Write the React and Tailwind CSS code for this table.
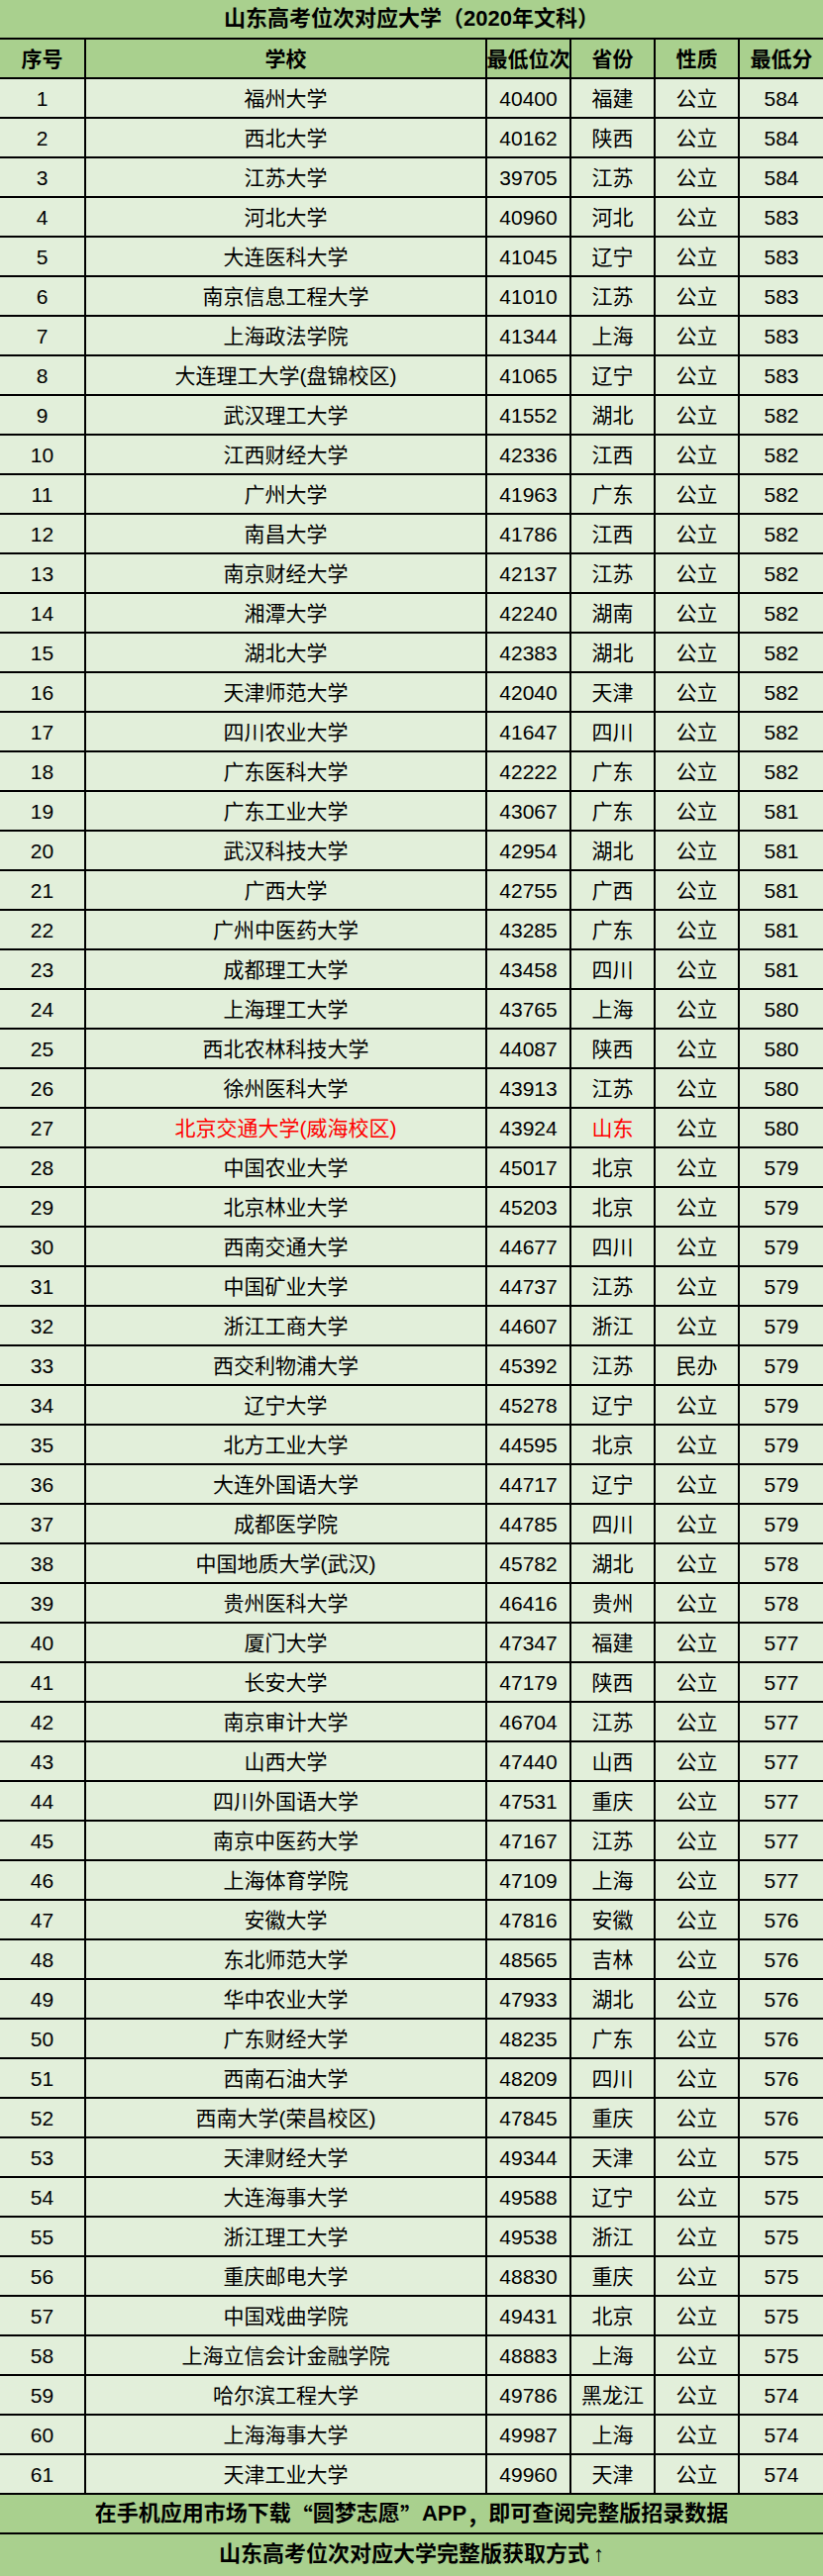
import React from "react";

const raw = `福州大学,40400,福建,公立,584
西北大学,40162,陕西,公立,584
江苏大学,39705,江苏,公立,584
河北大学,40960,河北,公立,583
大连医科大学,41045,辽宁,公立,583
南京信息工程大学,41010,江苏,公立,583
上海政法学院,41344,上海,公立,583
大连理工大学(盘锦校区),41065,辽宁,公立,583
武汉理工大学,41552,湖北,公立,582
江西财经大学,42336,江西,公立,582
广州大学,41963,广东,公立,582
南昌大学,41786,江西,公立,582
南京财经大学,42137,江苏,公立,582
湘潭大学,42240,湖南,公立,582
湖北大学,42383,湖北,公立,582
天津师范大学,42040,天津,公立,582
四川农业大学,41647,四川,公立,582
广东医科大学,42222,广东,公立,582
广东工业大学,43067,广东,公立,581
武汉科技大学,42954,湖北,公立,581
广西大学,42755,广西,公立,581
广州中医药大学,43285,广东,公立,581
成都理工大学,43458,四川,公立,581
上海理工大学,43765,上海,公立,580
西北农林科技大学,44087,陕西,公立,580
徐州医科大学,43913,江苏,公立,580
北京交通大学(威海校区),43924,山东,公立,580
中国农业大学,45017,北京,公立,579
北京林业大学,45203,北京,公立,579
西南交通大学,44677,四川,公立,579
中国矿业大学,44737,江苏,公立,579
浙江工商大学,44607,浙江,公立,579
西交利物浦大学,45392,江苏,民办,579
辽宁大学,45278,辽宁,公立,579
北方工业大学,44595,北京,公立,579
大连外国语大学,44717,辽宁,公立,579
成都医学院,44785,四川,公立,579
中国地质大学(武汉),45782,湖北,公立,578
贵州医科大学,46416,贵州,公立,578
厦门大学,47347,福建,公立,577
长安大学,47179,陕西,公立,577
南京审计大学,46704,江苏,公立,577
山西大学,47440,山西,公立,577
四川外国语大学,47531,重庆,公立,577
南京中医药大学,47167,江苏,公立,577
上海体育学院,47109,上海,公立,577
安徽大学,47816,安徽,公立,576
东北师范大学,48565,吉林,公立,576
华中农业大学,47933,湖北,公立,576
广东财经大学,48235,广东,公立,576
西南石油大学,48209,四川,公立,576
西南大学(荣昌校区),47845,重庆,公立,576
天津财经大学,49344,天津,公立,575
大连海事大学,49588,辽宁,公立,575
浙江理工大学,49538,浙江,公立,575
重庆邮电大学,48830,重庆,公立,575
中国戏曲学院,49431,北京,公立,575
上海立信会计金融学院,48883,上海,公立,575
哈尔滨工程大学,49786,黑龙江,公立,574
上海海事大学,49987,上海,公立,574
天津工业大学,49960,天津,公立,574`;

const rows = raw.split("\n").map((line, i) => {
  const [school, rank, province, type, score] = line.split(",");
  return { no: i + 1, school, rank, province, type, score };
});

const cols = [
  "w-[87px] border-r-2",
  "w-[405px] border-r-2",
  "w-[85px] border-r-2",
  "w-[85px] border-r-2",
  "w-[85px] border-r-2",
  "flex-1",
];

function Row({ cells, bg, bold, redCols = [] }) {
  return (
    <div className={`flex h-10 border-b-2 border-black ${bg}`}>
      {cells.map((c, i) => (
        <div
          key={i}
          className={`${cols[i]} border-black flex items-center justify-center whitespace-nowrap ${
            bold ? "font-bold" : ""
          } ${redCols.includes(i) ? "text-[#ff0000]" : "text-black"}`}
        >
          {c}
        </div>
      ))}
    </div>
  );
}

function Cjk({ children }) {
  return <span className="font-['Noto_Sans_CJK_SC',sans-serif]">{children}</span>;
}

export default function App() {
  return (
    <div className="w-[831px] h-[2602px] bg-[#a9d08e] text-[21px] leading-none font-['Liberation_Sans','Noto_Sans_CJK_SC',sans-serif]">
      {/* Title */}
      <div className="h-10 border-b-2 border-black flex items-center justify-center font-bold text-[22px]">
        山东高考位次对应大学（2020年文科）
      </div>

      {/* Header */}
      <Row
        bg="bg-[#a9d08e]"
        bold
        cells={["序号", "学校", "最低位次", "省份", "性质", "最低分"]}
      />

      {/* Data */}
      {rows.map((r) => (
        <Row
          key={r.no}
          bg="bg-[#e2efda]"
          redCols={r.no === 27 ? [1, 3] : []}
          cells={[r.no, r.school, r.rank, r.province, r.type, r.score]}
        />
      ))}

      {/* Footer */}
      <div className="h-10 border-b-2 border-black flex items-center justify-center font-bold text-[22px]">
        在手机应用市场下载<Cjk>“</Cjk>圆梦志愿<Cjk>”</Cjk>APP<Cjk>，</Cjk>即可查阅完整版招录数据
      </div>
      <div className="h-10 flex items-center justify-center font-bold text-[22px]">
        山东高考位次对应大学完整版获取方式<span className="ml-1 font-normal">↑</span>
      </div>
    </div>
  );
}
